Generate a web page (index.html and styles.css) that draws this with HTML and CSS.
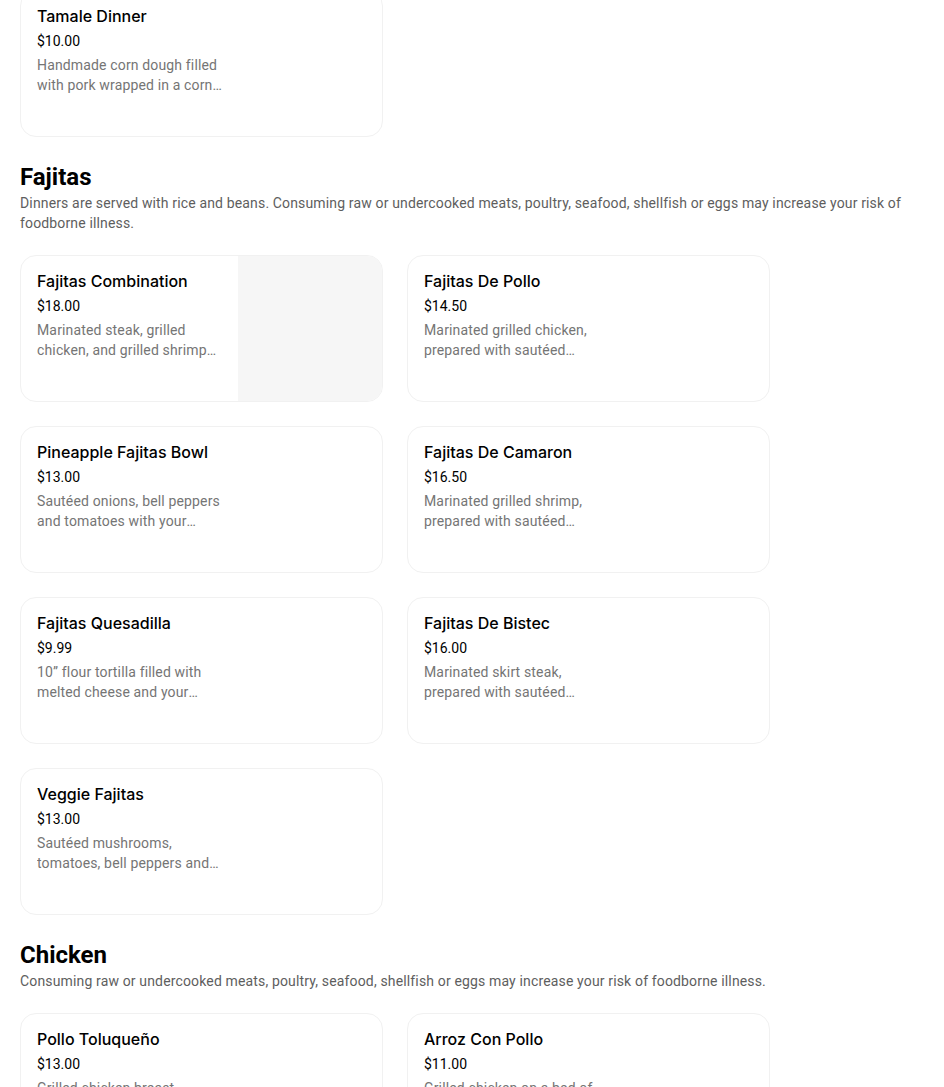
FILE: index.html
```html
<!DOCTYPE html>
<html lang="en">
<head>
<meta charset="utf-8">
<title>Menu</title>
<link rel="stylesheet" href="styles.css">
</head>
<body>
<main class="menu">
  <section class="section section-first">
    <div class="grid">
      <article class="card">
        <div class="card-text">
          <h3 class="item-title">Tamale Dinner</h3>
          <div class="item-price">$10.00</div>
          <p class="item-desc">Handmade corn dough filled with pork wrapped in a corn husk, served with rice and beans.</p>
        </div>
      </article>
    </div>
  </section>

  <section class="section">
    <h2 class="section-title">Fajitas</h2>
    <p class="section-sub">Dinners are served with rice and beans. Consuming raw or undercooked meats, poultry, seafood, shellfish or eggs may increase your risk of foodborne illness.</p>
    <div class="grid">
      <article class="card">
        <div class="card-text">
          <h3 class="item-title">Fajitas Combination</h3>
          <div class="item-price">$18.00</div>
          <p class="item-desc">Marinated steak, grilled chicken, and grilled shrimp prepared with sautéed onions and bell peppers.</p>
        </div>
        <div class="card-img"></div>
      </article>
      <article class="card">
        <div class="card-text">
          <h3 class="item-title">Fajitas De Pollo</h3>
          <div class="item-price">$14.50</div>
          <p class="item-desc">Marinated grilled chicken, prepared with sautéed onions and bell peppers.</p>
        </div>
      </article>
      <article class="card">
        <div class="card-text">
          <h3 class="item-title">Pineapple Fajitas Bowl</h3>
          <div class="item-price">$13.00</div>
          <p class="item-desc">Sautéed onions, bell peppers and tomatoes with your choice of meat served in a pineapple.</p>
        </div>
      </article>
      <article class="card">
        <div class="card-text">
          <h3 class="item-title">Fajitas De Camaron</h3>
          <div class="item-price">$16.50</div>
          <p class="item-desc">Marinated grilled shrimp, prepared with sautéed onions and bell peppers.</p>
        </div>
      </article>
      <article class="card">
        <div class="card-text">
          <h3 class="item-title">Fajitas Quesadilla</h3>
          <div class="item-price">$9.99</div>
          <p class="item-desc">10” flour tortilla filled with melted cheese and your choice of fajita meat.</p>
        </div>
      </article>
      <article class="card">
        <div class="card-text">
          <h3 class="item-title">Fajitas De Bistec</h3>
          <div class="item-price">$16.00</div>
          <p class="item-desc">Marinated skirt steak, prepared with sautéed onions and bell peppers.</p>
        </div>
      </article>
      <article class="card">
        <div class="card-text">
          <h3 class="item-title">Veggie Fajitas</h3>
          <div class="item-price">$13.00</div>
          <p class="item-desc">Sautéed mushrooms, tomatoes, bell peppers and onions served with tortillas.</p>
        </div>
      </article>
    </div>
  </section>

  <section class="section">
    <h2 class="section-title">Chicken</h2>
    <p class="section-sub">Consuming raw or undercooked meats, poultry, seafood, shellfish or eggs may increase your risk of foodborne illness.</p>
    <div class="grid">
      <article class="card">
        <div class="card-text">
          <h3 class="item-title">Pollo Toluqueño</h3>
          <div class="item-price">$13.00</div>
          <p class="item-desc">Grilled chicken breast topped with chorizo and melted cheese.</p>
        </div>
      </article>
      <article class="card">
        <div class="card-text">
          <h3 class="item-title">Arroz Con Pollo</h3>
          <div class="item-price">$11.00</div>
          <p class="item-desc">Grilled chicken on a bed of rice topped with cheese sauce.</p>
        </div>
      </article>
    </div>
  </section>
</main>
</body>
</html>
```

FILE: styles.css
```css
* {
  box-sizing: border-box;
}

html, body {
  margin: 0;
  padding: 0;
  background: #ffffff;
}

body {
  font-family: "Roboto", "Liberation Sans", sans-serif;
  color: #000000;
  overflow: hidden;
  height: 1087px;
}

.menu {
  padding: 0 20px;
  margin-top: -10px;
}

.section {
  padding-top: 24px;
}

.section-first {
  padding-top: 0;
}

.section-title {
  margin: 0;
  font-family: "Roboto", "Liberation Sans", sans-serif;
  font-size: 24px;
  line-height: 32px;
  font-weight: 700;
}

.section-sub {
  margin: 0;
  font-size: 14px;
  line-height: 20px;
  letter-spacing: 0.15px;
  color: #5e5e5e;
}

.section-sub + .grid {
  margin-top: 22px;
}

.grid {
  display: grid;
  grid-template-columns: repeat(2, 363px);
  gap: 24px;
}

.card {
  display: flex;
  height: 147px;
  border: 1px solid #f1f1f1;
  border-radius: 16px;
  overflow: hidden;
  background: #ffffff;
}

.card-text {
  width: 217px;
  padding: 15px 16px 0 16px;
  flex: none;
}

.card-img {
  flex: 1;
  background: #f6f6f6;
}

.item-title {
  margin: 0;
  font-family: "Inter", "Liberation Sans", sans-serif;
  font-size: 16px;
  line-height: 20px;
  font-weight: 500;
}

.item-price {
  margin-top: 5px;
  font-size: 14px;
  line-height: 20px;
}

.item-desc {
  margin: 4px 0 0 0;
  font-size: 14px;
  line-height: 20px;
  letter-spacing: 0.15px;
  color: #757575;
  display: -webkit-box;
  -webkit-line-clamp: 2;
  -webkit-box-orient: vertical;
  overflow: hidden;
}
```
